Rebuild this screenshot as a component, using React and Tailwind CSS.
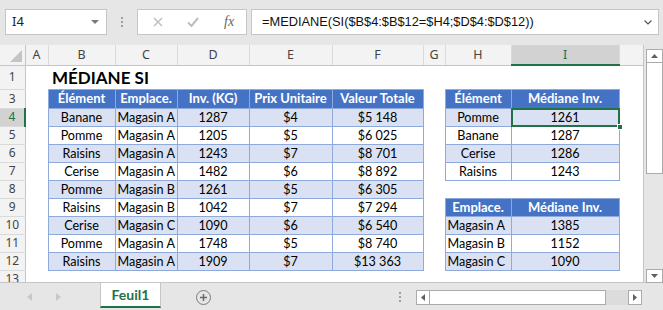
import React from 'react';

const colW = ['w-[25px]', 'w-[23px]', 'w-[67px]', 'w-[62px]', 'w-[72px]', 'w-[83px]', 'w-[91px]', 'w-[22px]', 'w-[66px]', 'w-[108px]', 'w-[24px]'];
const letters = ['A', 'B', 'C', 'D', 'E', 'F', 'G', 'H', 'I', ''];

const stock = [
  ['Banane', 'Magasin A', '1287', '$4', '$5 148'],
  ['Pomme', 'Magasin A', '1205', '$5', '$6 025'],
  ['Raisins', 'Magasin A', '1243', '$7', '$8 701'],
  ['Cerise', 'Magasin A', '1482', '$6', '$8 892'],
  ['Pomme', 'Magasin B', '1261', '$5', '$6 305'],
  ['Raisins', 'Magasin B', '1042', '$7', '$7 294'],
  ['Cerise', 'Magasin C', '1090', '$6', '$6 540'],
  ['Pomme', 'Magasin A', '1748', '$5', '$8 740'],
  ['Raisins', 'Magasin A', '1909', '$7', '$13 363'],
];

const byItem = [['Pomme', '1261'], ['Banane', '1287'], ['Cerise', '1286'], ['Raisins', '1243']];
const byStore = [['Magasin A', '1385'], ['Magasin B', '1152'], ['Magasin C', '1090']];

function RowHead({ n, sel }) {
  return (
    <td className={`p-0 text-center align-middle text-[12px] leading-none font-['Noto_Sans',sans-serif] border-b border-[#dadada] ${sel ? 'bg-[#d2d2d2] text-[#217346] border-r-2 border-r-[#217346]' : 'bg-[#f3f3f3] text-[#444] border-r border-r-[#c6c6c6]'}`}>
      {n}
    </td>
  );
}

function Head({ children }) {
  return (
    <td className="p-0 bg-[#4472c4] text-white font-bold text-[13px] text-center border border-[#8ea9db] whitespace-nowrap">
      {children}
    </td>
  );
}

function Cell({ children, band, left, sel }) {
  return (
    <td className={`p-0 border border-[#8ea9db] whitespace-nowrap ${band ? 'bg-[#d9e1f2]' : 'bg-white'} ${left ? 'text-left pl-[2px]' : 'text-center'} ${sel ? 'relative' : ''}`}>
      {children}
      {sel && (
        <>
          <div className="absolute -inset-[1px] border-2 border-[#217346]" />
          <div className="absolute -right-[4px] -bottom-[4px] w-[6px] h-[6px] bg-[#217346] border border-white" />
        </>
      )}
    </td>
  );
}

function Empty({ span = 1 }) {
  return <td colSpan={span} className="p-0" />;
}

function Dots() {
  return (
    <div className="flex flex-col gap-[2px]">
      <span className="w-[2px] h-[2px] bg-[#a0a0a0]" />
      <span className="w-[2px] h-[2px] bg-[#a0a0a0]" />
      <span className="w-[2px] h-[2px] bg-[#a0a0a0]" />
    </div>
  );
}

function FormulaBar() {
  return (
    <div className="h-[45px] flex items-start pt-[9px]">
      <div className="ml-[5px] w-[102px] h-[26px] bg-white border border-[#c6c6c6] flex items-center justify-between pl-[6px] pr-[7px]">
        <span className="text-[13px] text-[#222] font-['Noto_Sans',sans-serif]">I4</span>
        <svg width="8" height="4" viewBox="0 0 8 4"><path d="M0 0h8L4 4z" fill="#7a7a7a" /></svg>
      </div>
      <div className="w-[30px] h-[26px] flex items-center justify-center">
        <Dots />
      </div>
      <div className="w-[110px] h-[26px] bg-white border border-[#c6c6c6] flex items-center">
        <svg className="ml-[15px]" width="10" height="10" viewBox="0 0 10 10">
          <path d="M1 1L9 9M9 1L1 9" stroke="#bdbdbd" strokeWidth="1.4" />
        </svg>
        <svg className="ml-[24px]" width="12" height="10" viewBox="0 0 12 10">
          <path d="M1 5.5L4.5 9L11 1" stroke="#bdbdbd" strokeWidth="2" fill="none" />
        </svg>
        <span className="ml-[25px] text-[14px] italic text-[#666] font-['Liberation_Serif',serif] leading-none">fx</span>
      </div>
      <div className="ml-[4px] w-[408px] h-[26px] bg-white border border-[#c6c6c6] flex items-center justify-between pl-[10px] pr-[6px]">
        <span className="text-[12.8px] text-[#111] font-['Liberation_Sans',sans-serif]">=MEDIANE(SI($B$4:$B$12=$H4;$D$4:$D$12))</span>
        <svg width="8" height="5" viewBox="0 0 8 5"><path d="M0.5 0.5L4 4L7.5 0.5" stroke="#555" strokeWidth="1.2" fill="none" /></svg>
      </div>
    </div>
  );
}

function Sheet() {
  return (
    <div className="w-[644px] h-[237px] bg-white border-r border-[#c6c6c6] overflow-hidden">
      <table className="table-fixed border-collapse w-[643px] text-[12.6px] leading-[15px] text-black font-['Lato',sans-serif]">
        <colgroup>
          {colW.map((w, i) => <col key={i} className={w} />)}
        </colgroup>
        <tbody>
          <tr className="h-[20px]">
            <td className="p-0 bg-[#f3f3f3] border-r border-b border-[#c6c6c6] relative">
              <svg className="absolute right-[3px] bottom-[3px]" width="12" height="12" viewBox="0 0 12 12"><path d="M12 0V12H0z" fill="#c4c4c4" /></svg>
            </td>
            {letters.map((l, i) => (
              <td key={i} className={`p-0 text-center text-[12.5px] font-['Noto_Sans',sans-serif] border-r border-[#dadada] ${l === 'I' ? 'bg-[#d2d2d2] text-[#217346] border-b-2 border-b-[#217346]' : 'bg-[#f3f3f3] text-[#444] border-b border-b-[#c6c6c6]'}`}>
                {l}
              </td>
            ))}
          </tr>
          <tr className="h-[24px]">
            <RowHead n="1" />
            <Empty />
            <td colSpan={4} className="p-0 pl-[4px] align-bottom pb-[1px] text-[17px] leading-[20px] font-bold whitespace-nowrap">MÉDIANE SI</td>
            <Empty span={5} />
          </tr>
          <tr className="h-[19px]">
            <RowHead n="3" />
            <Empty />
            <Head>Élément</Head>
            <Head>Emplace.</Head>
            <Head>Inv. (KG)</Head>
            <Head>Prix Unitaire</Head>
            <Head>Valeur Totale</Head>
            <Empty />
            <Head>Élément</Head>
            <Head>Médiane Inv.</Head>
            <Empty />
          </tr>
          {stock.map((r, i) => {
            const row = i + 4;
            const band = i % 2 === 0;
            let right;
            if (row <= 7) {
              const [a, b] = byItem[i];
              right = (
                <>
                  <Cell band={band}>{a}</Cell>
                  <Cell band={band} sel={row === 4}>{b}</Cell>
                </>
              );
            } else if (row === 8) {
              right = <Empty span={2} />;
            } else if (row === 9) {
              right = (
                <>
                  <Head>Emplace.</Head>
                  <Head>Médiane Inv.</Head>
                </>
              );
            } else {
              const [a, b] = byStore[row - 10];
              right = (
                <>
                  <Cell band={band} left>{a}</Cell>
                  <Cell band={band}>{b}</Cell>
                </>
              );
            }
            return (
              <tr key={row} className="h-[18px]">
                <RowHead n={row} sel={row === 4} />
                <Empty />
                <Cell band={band}>{r[0]}</Cell>
                <Cell band={band} left>{r[1]}</Cell>
                <Cell band={band}>{r[2]}</Cell>
                <Cell band={band}>{r[3]}</Cell>
                <Cell band={band}>{r[4]}</Cell>
                <Empty />
                {right}
                <Empty />
              </tr>
            );
          })}
          <tr className="h-[18px]">
            <RowHead n="13" />
            <Empty span={10} />
          </tr>
        </tbody>
      </table>
    </div>
  );
}

function VScroll() {
  return (
    <div className="ml-[2px] w-[17px] h-[238px] flex flex-col pt-[4px]">
      <div className="h-[14px] bg-white border border-[#ababab] flex items-center justify-center">
        <svg width="7" height="4" viewBox="0 0 7 4"><path d="M0 4L3.5 0L7 4z" fill="#606060" /></svg>
      </div>
      <div className="h-[111px] bg-white border-x border-b border-[#ababab]" />
      <div className="flex-1" />
      <div className="h-[14px] bg-white border border-[#ababab] flex items-center justify-center">
        <svg width="7" height="4" viewBox="0 0 7 4"><path d="M0 0L3.5 4L7 0z" fill="#606060" /></svg>
      </div>
    </div>
  );
}

function TabBar() {
  return (
    <div className="h-[28px] flex items-start">
      <div className="w-[100px] h-[28px] flex items-center pl-[27px] gap-[24px]">
        <svg width="5" height="8" viewBox="0 0 5 8"><path d="M5 0V8L0 4z" fill="#c8c8c8" /></svg>
        <svg width="5" height="8" viewBox="0 0 5 8"><path d="M0 0V8L5 4z" fill="#c8c8c8" /></svg>
      </div>
      <div className="w-[61px] h-[25px] bg-white border-x border-[#c6c6c6] border-b-2 border-b-[#217346] flex items-center justify-center text-[14px] font-bold text-[#217346] font-['Lato',sans-serif]">
        Feuil1
      </div>
      <div className="ml-[35px] h-[28px] flex items-center">
        <div className="w-[15px] h-[15px] rounded-full border-[1.5px] border-[#7a7a7a] flex items-center justify-center">
          <svg width="9" height="9" viewBox="0 0 9 9"><path d="M4.5 1V8M1 4.5H8" stroke="#6a6a6a" strokeWidth="1.5" /></svg>
        </div>
      </div>
      <div className="ml-[188px] h-[28px] flex items-center">
        <Dots />
      </div>
      <div className="ml-[15px] mt-[7px] w-[226px] h-[15px] flex">
        <div className="w-[14px] bg-white border border-[#ababab] flex items-center justify-center">
          <svg width="4" height="7" viewBox="0 0 4 7"><path d="M4 0V7L0 3.5z" fill="#606060" /></svg>
        </div>
        <div className="w-[176px] bg-white border-y border-r border-[#ababab]" />
        <div className="flex-1 bg-[#dcdcdc]" />
        <div className="w-[14px] bg-white border border-[#ababab] flex items-center justify-center">
          <svg width="4" height="7" viewBox="0 0 4 7"><path d="M0 0V7L4 3.5z" fill="#606060" /></svg>
        </div>
      </div>
    </div>
  );
}

export default function App() {
  return (
    <div className="w-[663px] h-[310px] bg-[#e6e6e6] overflow-hidden">
      <FormulaBar />
      <div className="flex border-b border-[#c6c6c6] h-[238px]">
        <Sheet />
        <VScroll />
      </div>
      <TabBar />
    </div>
  );
}
